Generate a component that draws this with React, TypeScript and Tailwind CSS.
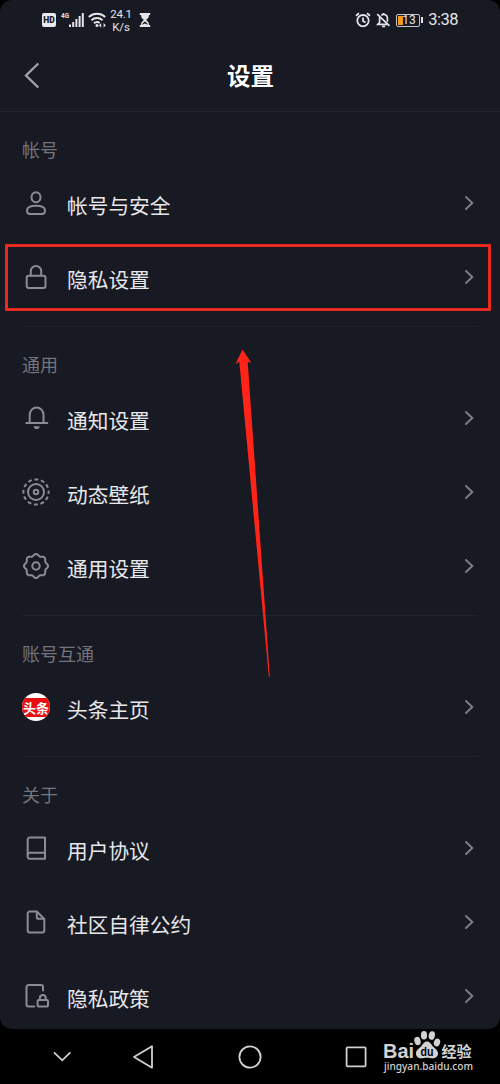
import React from "react";

type IconProps = { children: React.ReactNode };

function RowIcon({ children }: IconProps) {
  return (
    <svg
      className="h-7 w-7 shrink-0 text-[#8b8c93]"
      viewBox="0 0 28 28"
      fill="none"
      stroke="currentColor"
      strokeWidth="2"
      strokeLinejoin="round"
      strokeLinecap="round"
    >
      {children}
    </svg>
  );
}

// eight soft teeth around the centre
const gearPath = () => {
  const points: string[] = [];
  for (let i = 0; i <= 96; i++) {
    const a = (i / 96) * Math.PI * 2;
    const r = 11.1 + 0.95 * Math.cos(a * 8);
    points.push(
      `${(14 + r * Math.sin(a)).toFixed(2)} ${(14 - r * Math.cos(a)).toFixed(2)}`
    );
  }
  return `M${points.join("L")}Z`;
};

const icons = {
  user: (
    <RowIcon>
      <ellipse cx="14" cy="8.2" rx="4.5" ry="5" />
      <path d="M14 16.7c5.4 0 9 1.600 9 4.700 0 2.600-1.600 3.700-4 3.700H9c-2.400 0-4-1.100-4-3.700 0-3.100 3.600-4.700 9-4.700z" />
    </RowIcon>
  ),
  lock: (
    <RowIcon>
      <rect x="4.7" y="12.7" width="18.8" height="12.2" rx="2" />
      <path d="M8.8 12.500V8.200a5.200 5.200 0 0 1 10.400 0v4.300" />
    </RowIcon>
  ),
  bell: (
    <RowIcon>
      <path d="M4.300 19h21M7.700 19v-8.200a6.900 7.400 0 0 1 13.800 0V19" />
      <path d="M12.300 22.900h4.800l-1.300 1.500h-2.200z" fill="currentColor" strokeWidth="1.2" />
    </RowIcon>
  ),
  wallpaper: (
    <RowIcon>
      <circle cx="14" cy="14" r="2.3" />
      <circle cx="14" cy="14" r="8" />
      <circle
        cx="14"
        cy="14"
        r="12.6"
        strokeLinecap="butt"
        strokeDasharray="3.9 2.697"
        strokeDashoffset="1.95"
      />
    </RowIcon>
  ),
  gear: (
    <RowIcon>
      <path d={gearPath()} />
      <circle cx="14" cy="14" r="3.7" />
    </RowIcon>
  ),
  toutiao: (
    <div className="flex h-7 w-7 shrink-0 items-center overflow-hidden rounded-full bg-white">
      <div className="flex h-[19px] w-7 items-center justify-center whitespace-nowrap bg-[#e60f12] text-[13px] font-bold leading-none text-white">
        头条
      </div>
    </div>
  ),
  book: (
    <RowIcon>
      <path d="M23 3.600H7.700a2 2 0 0 0-2 2v17.200a2 2 0 0 0 2 2H23z" />
      <path d="M5.700 21a2.200 2.200 0 0 1 2.200-2.200H23" />
    </RowIcon>
  ),
  file: (
    <RowIcon>
      <path d="M14.800 3.500H7.700a2 2 0 0 0-2 2v16.900a2 2 0 0 0 2 2h12.600a2 2 0 0 0 2-2V11z" />
      <path d="M14.800 3.700v5.500a1.600 1.600 0 0 0 1.600 1.600h5.700" />
    </RowIcon>
  ),
  policy: (
    <RowIcon>
      <path d="M21 8.600V5a2 2 0 0 0-2-2H6.500a2 2 0 0 0-2 2v17.600a2 2 0 0 0 2 2h5.700" />
      <rect x="15.600" y="18" width="10.400" height="6.600" rx="1" />
      <path d="M17.900 18v-2a2.900 2.900 0 0 1 5.800 0v2" />
    </RowIcon>
  )
};

interface Section {
  title: string;
  rows: { icon: keyof typeof icons; label: string; marked?: boolean }[];
}

const sections: Section[] = [
  {
    title: "帐号",
    rows: [
      { icon: "user", label: "帐号与安全" },
      { icon: "lock", label: "隐私设置", marked: true }
    ]
  },
  {
    title: "通用",
    rows: [
      { icon: "bell", label: "通知设置" },
      { icon: "wallpaper", label: "动态壁纸" },
      { icon: "gear", label: "通用设置" }
    ]
  },
  {
    title: "账号互通",
    rows: [{ icon: "toutiao", label: "头条主页" }]
  },
  {
    title: "关于",
    rows: [
      { icon: "book", label: "用户协议" },
      { icon: "file", label: "社区自律公约" },
      { icon: "policy", label: "隐私政策" }
    ]
  }
];

function StatusBar() {
  return (
    <div className="flex h-10 items-center pr-[42px] pl-[42px] font-[Roboto] text-[#e4e5e8]">
      <div className="flex h-3.5 w-3.5 items-center justify-center rounded-[2px] bg-[#e9eaec] text-[8.5px] font-black leading-none text-[#171923]">
        HD
      </div>
      <svg className="ml-[5px] h-5 w-6" viewBox="0 0 24 20" fill="currentColor">
        <text x="0" y="8" fontSize="7.5" fontWeight="700" textLength="8" lengthAdjust="spacingAndGlyphs">
          4G
        </text>
        <rect x="8" y="14.5" width="2" height="2.5" />
        <rect x="11.2" y="12" width="2" height="5" />
        <rect x="14.4" y="9" width="2" height="8" />
        <rect x="17.6" y="6" width="2" height="11" />
        <rect x="20.8" y="3" width="2" height="14" />
      </svg>
      <svg
        className="ml-[3px] h-5 w-[18px]"
        viewBox="0 0 18 20"
        fill="none"
        stroke="currentColor"
        strokeWidth="1.9"
      >
        <path d="M.8 7a12 12 0 0 1 16.400 0M3.400 10.200a8.400 8.400 0 0 1 11.200 0M5.900 13.300a4.800 4.800 0 0 1 5.800-.4" />
        <circle cx="9" cy="15.400" r="1.500" fill="currentColor" stroke="none" />
        <path d="M11 15.300l2.200-2.400v4.800zM17.800 15.300l-2.200-2.400v4.800z" fill="currentColor" stroke="none" />
      </svg>
      <div className="mt-px ml-[5px] w-5 text-center text-[11.5px] leading-[12.500px] tracking-[-0.200px]">
        <div className="-mx-1">24.1</div>
        <div>K/s</div>
      </div>
      <svg className="ml-2 h-4 w-3" viewBox="0 0 12 16" fill="currentColor">
        <path d="M.8 1h10.400v2H10c0 2.600-1.300 3.800-2.900 5 1.600 1.200 2.900 2.400 2.900 5h1.200v2H.8v-2H2c0-2.600 1.300-3.800 2.900-5C3.300 6.800 2 5.600 2 3H.8z" />
        <path d="M3.300 12.800c.2-1.500 1.200-2.600 2.700-3.400 1.500.8 2.500 1.900 2.700 3.400L6 11.600z" fill="#171923" />
      </svg>

      <svg
        className="ml-auto h-4 w-4"
        viewBox="0 0 16 16"
        fill="none"
        stroke="currentColor"
        strokeWidth="1.8"
      >
        <circle cx="8" cy="8.700" r="5.700" />
        <path d="M8 5.500v3.500l2.600 1.500M1 3.800L4 1.300M15 3.800L12 1.300" />
      </svg>
      <svg
        className="ml-[5px] h-4 w-[15px]"
        viewBox="0 0 15 16"
        fill="none"
        stroke="currentColor"
        strokeWidth="1.7"
      >
        <path d="M1.200 2.200l12.300 11.600M3.600 5.200v5.200L1.800 12.400h9.400M5.300 3.500a3.600 3.600 0 0 1 6.100 2.900v3.400" />
        <path d="M6 14.400h3.200M7.500 3V1" />
      </svg>
      <div className="ml-[5px] flex h-[13px] w-6 items-center rounded-[2px] border border-[#c5c6ca] p-px">
        <div className="h-full w-[5px] bg-[#f29a1d]" />
        <span className="-ml-px text-[12px] leading-none">13</span>
      </div>
      <div className="ml-px h-1.5 w-[2px] bg-[#e4e5e8]" />
      <span className="ml-[5px] text-[16.5px] leading-none tracking-[-0.500px]">3:38</span>
    </div>
  );
}

function Row({ icon, label, marked }: Section["rows"][number]) {
  return (
    <div className="relative flex h-[74px] items-center pr-[25px] pl-[22px]">
      <div className="-mt-0.5 flex">{icons[icon]}</div>
      <span className="mt-0.5 ml-[17px] text-[20.700px] leading-7 text-[#e8e8ea]">{label}</span>
      <svg
        className="-mt-0.5 ml-auto h-4 w-3"
        viewBox="0 0 12 16"
        fill="none"
        stroke="#7c7d84"
        strokeWidth="2"
        strokeLinecap="round"
      >
        <path d="M3 2L9.300 8 3 14" />
      </svg>
      {marked && (
        <div className="absolute top-[3px] right-[9px] bottom-1 left-[5px] rounded-[1px] border-[3px] border-[#e92a20]" />
      )}
    </div>
  );
}

function NavBar() {
  return (
    <div className="flex h-[55px] items-center text-[#d0d0d0]">
      <svg className="ml-[52px] h-7 w-5" viewBox="0 0 20 28" fill="none" stroke="currentColor" strokeWidth="1.800">
        <path d="M2 9.300l8.200 8L18.400 9.300" />
      </svg>
      <svg className="ml-[60px] h-7 w-6" viewBox="0 0 24 28" fill="none" stroke="currentColor" strokeWidth="1.800" strokeLinejoin="round">
        <path d="M2 14L20 3.300v21.400z" />
      </svg>
      <svg className="ml-[82px] h-7 w-6" viewBox="0 0 24 28" fill="none" stroke="currentColor" strokeWidth="1.800">
        <circle cx="12" cy="14" r="10.600" />
      </svg>
      <svg className="ml-[82px] h-7 w-6" viewBox="0 0 24 28" fill="none" stroke="currentColor" strokeWidth="1.800">
        <rect x="2.600" y="4.300" width="19" height="19" rx="1" />
      </svg>
    </div>
  );
}

function Watermark() {
  return (
    <svg
      className="absolute top-[1028px] left-[380px] h-[48px] w-[100px] font-['Noto_Sans_CJK_SC',sans-serif]"
      viewBox="0 0 100 48"
      fill="#d2d2d2"
    >
      <text x="3" y="29.500" fontFamily="Liberation Sans" fontSize="20" fontWeight="700" textLength="31" lengthAdjust="spacingAndGlyphs">
        Bai
      </text>
      <ellipse cx="37.500" cy="13" rx="3.100" ry="4.200" transform="rotate(-15 37.500 13)" />
      <ellipse cx="44" cy="7.200" rx="3.100" ry="4.300" />
      <ellipse cx="51.800" cy="7.500" rx="3.100" ry="4.300" transform="rotate(12 51.800 7.500)" />
      <ellipse cx="57" cy="14.500" rx="3.100" ry="4" transform="rotate(18 57 14.500)" />
      <path d="M47 13.500c3 0 4.200 2.800 6 5 2 2 5 3.500 5 7 0 3-2.300 4.800-5.200 4.800-2 0-3.600-.6-5.800-.6s-3.800.6-5.800.6c-3 0-5.200-1.900-5.200-4.800 0-3.500 3-5 5-7 1.800-2.200 3-5 6-5z" />
      <text x="40.500" y="27.500" fontFamily="Liberation Sans" fontSize="12" fontWeight="700" fill="#000" textLength="13" lengthAdjust="spacingAndGlyphs">
        du
      </text>
      <text x="61.500" y="28.500" fontSize="15" fontWeight="700" textLength="30">
        经验
      </text>
      <text x="4" y="42" fontFamily="Noto Sans" fontSize="10.500" fontWeight="500" textLength="89" lengthAdjust="spacingAndGlyphs">
        jingyan.baidu.com
      </text>
    </svg>
  );
}

export default function App() {
  return (
    <div className="relative h-[1084px] w-[500px] overflow-hidden bg-black font-['Noto_Sans_CJK_SC',sans-serif]">
      <div className="h-[1029px] overflow-hidden rounded-[12px] bg-[#171923]">
        <StatusBar />
        <header className="relative flex h-[71px] items-center justify-center">
          <svg
            className="absolute top-[22px] left-[22px] h-7 w-5"
            viewBox="0 0 20 28"
            fill="none"
            stroke="#a0a1a7"
            strokeWidth="2.400"
          >
            <path d="M16.300 1.500L4 13.500l12.300 12" />
          </svg>
          <h1 className="ml-px text-[23.500px] font-bold leading-none text-white">设置</h1>
        </header>

        {sections.map((section, i) => (
          <section key={section.title} className="pb-[11px]">
            <div
              className={
                i === 0
                  ? "h-px bg-[#23252e]"
                  : "mx-[22px] h-px bg-[#21232c]"
              }
            />
            <h2 className="flex h-[55px] items-center pt-[19px] pl-[22px] text-[18px] leading-none text-[#73747c]">
              {section.title}
            </h2>
            {section.rows.map((row) => (
              <Row key={row.label} {...row} />
            ))}
          </section>
        ))}
      </div>

      <NavBar />

      {/* pointer to the privacy row */}
      <svg
        className="absolute top-[348px] left-[230px] h-[330px] w-[44px]"
        viewBox="0 0 44 330"
        fill="#ff2417"
      >
        <path d="M12.500 1.500L21.500 15L17.700 13.800L39.800 328.500L38.800 328.500L9.300 13.800L5.500 16z" />
      </svg>

      <Watermark />
    </div>
  );
}
